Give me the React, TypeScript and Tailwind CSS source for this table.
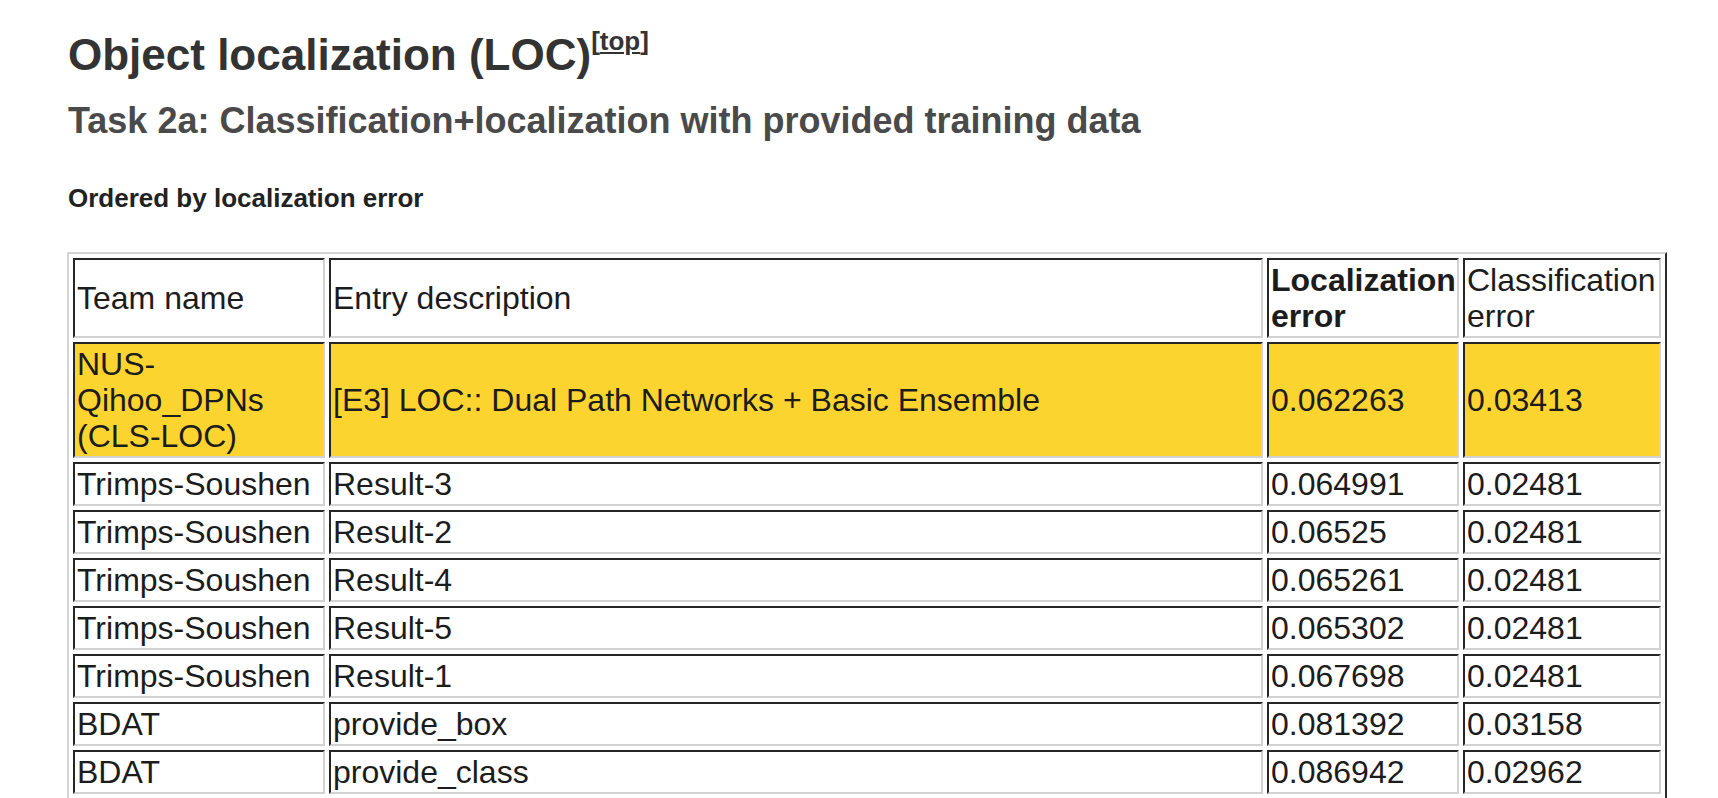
const rows = [
  {
    team: "NUS-Qihoo_DPNs (CLS-LOC)",
    entry: "[E3] LOC:: Dual Path Networks + Basic Ensemble",
    loc: "0.062263",
    cls: "0.03413",
    winner: true,
  },
  { team: "Trimps-Soushen", entry: "Result-3", loc: "0.064991", cls: "0.02481" },
  { team: "Trimps-Soushen", entry: "Result-2", loc: "0.06525", cls: "0.02481" },
  { team: "Trimps-Soushen", entry: "Result-4", loc: "0.065261", cls: "0.02481" },
  { team: "Trimps-Soushen", entry: "Result-5", loc: "0.065302", cls: "0.02481" },
  { team: "Trimps-Soushen", entry: "Result-1", loc: "0.067698", cls: "0.02481" },
  { team: "BDAT", entry: "provide_box", loc: "0.081392", cls: "0.03158" },
  { team: "BDAT", entry: "provide_class", loc: "0.086942", cls: "0.02962" },
];

const cell =
  "border-2 border-solid border-t-[#262626] border-l-[#262626] border-r-[#d2d2d2] border-b-[#d2d2d2] p-[2px] align-middle text-left";

export default function App() {
  return (
    <div
      className="min-h-screen bg-white pl-[68px] pt-[29px] text-[#1c1c1c]"
      style={{ fontFamily: '"Liberation Sans", Arial, Helvetica, sans-serif' }}
    >
      <h2 className="text-[44px] leading-[52px] font-bold text-[#333333]">
        Object localization (LOC)
        <sup className="-top-5 text-[26px] font-bold text-[#333333]">
          [<a href="#top" className="underline">top</a>]
        </sup>
      </h2>
      <h3 className="mt-[19px] text-[36px] leading-[42px] font-bold text-[#4a4a4a]">
        Task 2a: Classification+localization with provided training data
      </h3>
      <h4 className="mt-[41px] text-[26px] leading-[30px] font-bold text-[#222222]">
        Ordered by localization error
      </h4>

      <table className="mt-[39px] -ml-px w-[1600px] table-fixed border-separate border-spacing-[4px] border-2 border-solid border-t-[#d4d4d4] border-l-[#d4d4d4] border-r-[#2a2a2a] border-b-[#2a2a2a] text-[32px] leading-[36px]">
        <tbody>
          <tr>
            <td className={`${cell} w-[252px]`}>Team name</td>
            <td className={`${cell} w-[934px]`}>Entry description</td>
            <td className={`${cell} w-[192px] font-bold`}>Localization error</td>
            <td className={`${cell} w-[198px]`}>Classification error</td>
          </tr>
          {rows.map((r, i) => (
            <tr key={i} className={r.winner ? "bg-[#fcd430]" : ""}>
              <td className={cell}>{r.team}</td>
              <td className={cell}>{r.entry}</td>
              <td className={cell}>{r.loc}</td>
              <td className={cell}>{r.cls}</td>
            </tr>
          ))}
        </tbody>
      </table>
    </div>
  );
}
